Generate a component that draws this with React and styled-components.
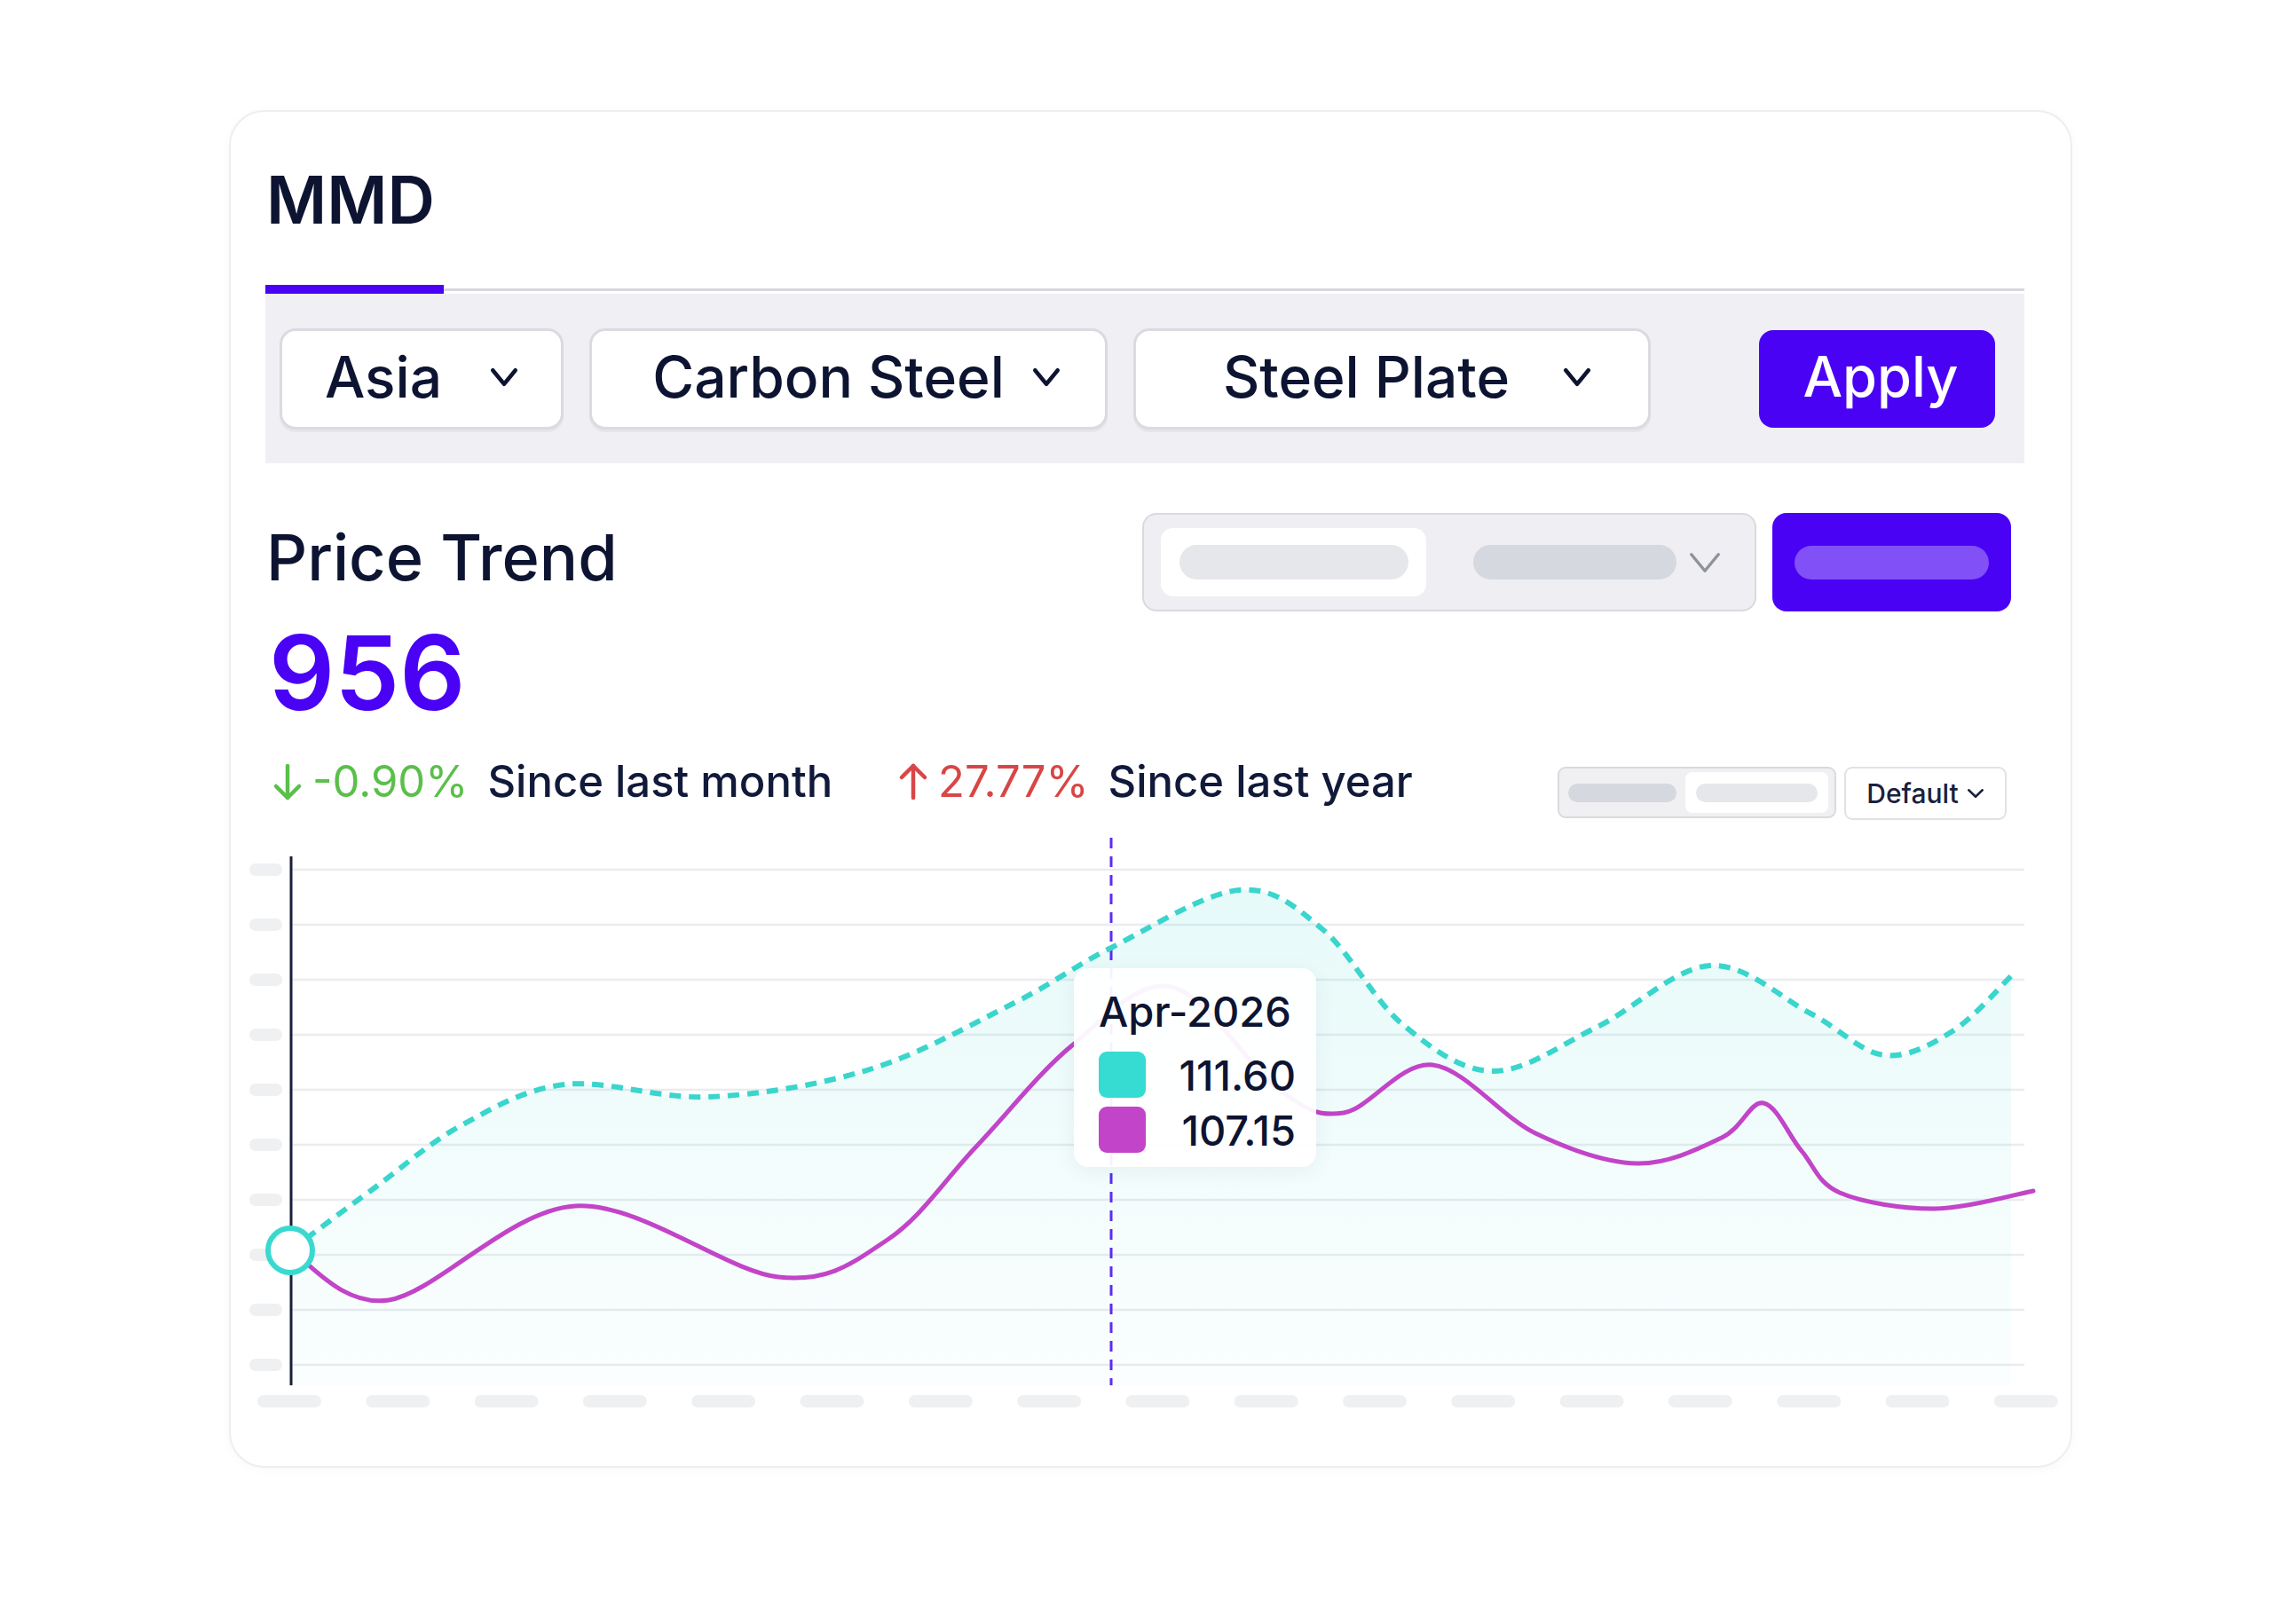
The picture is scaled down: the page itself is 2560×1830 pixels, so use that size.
import React from 'react';
import styled, { createGlobalStyle } from 'styled-components';

const GlobalStyle = createGlobalStyle`
  body {
    margin: 0;
    background: #fff;
    font-family: Inter, "Noto Sans", sans-serif;
  }
`;

const PURPLE = '#4a02f5';
const INK = '#0d1431';

const Page = styled.div`
  box-sizing: border-box;
  min-height: 1830px;
  padding: 124px 0 0 258px;
`;

const Card = styled.div`
  box-sizing: border-box;
  width: 2077px;
  height: 1530px;
  border: 2px solid #eceef1;
  border-radius: 40px;
  background: #fff;
  box-shadow: 0 2px 12px rgba(20, 30, 60, 0.03);
  overflow: hidden;
`;

const Inner = styled.div`
  padding: 0 52px 0 39px;
`;

const Title = styled.h1`
  margin: 62px 0 0 1px;
  font-size: 74px;
  line-height: 1;
  font-weight: 600;
  color: ${INK};
`;

const TabStrip = styled.div`
  margin-top: 59px;
  height: 10px;
  background: linear-gradient(#d6d8dd, #d6d8dd) 0 4px / 100% 3px no-repeat;
`;

const ActiveTab = styled.div`
  width: 201px;
  height: 10px;
  background: ${PURPLE};
`;

const FilterBar = styled.div`
  box-sizing: border-box;
  height: 191px;
  padding: 0 33px 0 16px;
  display: flex;
  align-items: center;
  gap: 29px;
  background: #efeff4;
`;

const Select = styled.div`
  box-sizing: border-box;
  width: ${p => p.$w}px;
  height: 114px;
  display: flex;
  align-items: center;
  justify-content: center;
  gap: ${p => p.$gap}px;
  padding: 0 0 4px ${p => p.$shift || 0}px;
  border: 3px solid #dadbe0;
  border-radius: 18px;
  background: #fff;
  box-shadow: 0 3px 0 rgba(0, 0, 0, 0.04);
  font-size: 64px;
  font-weight: 500;
  line-height: 1;
  color: ${INK};
`;

const ApplyButton = styled.button`
  margin-left: auto;
  width: 266px;
  height: 110px;
  padding: 0 0 4px 8px;
  border: none;
  border-radius: 16px;
  background: ${PURPLE};
  color: #fff;
  font-family: inherit;
  font-size: 63px;
  font-weight: 500;
  line-height: 1;
`;

const Header = styled.div`
  display: flex;
  justify-content: space-between;
  align-items: flex-start;
  padding-top: 56px;
`;

const Heading = styled.h2`
  margin: 14px 0 0 1px;
  font-size: 72px;
  line-height: 1;
  font-weight: 500;
  color: ${INK};
`;

const BigNumber = styled.div`
  margin: 36px 0 0 4px;
  font-size: 116px;
  line-height: 1;
  font-weight: 600;
  color: ${PURPLE};
`;

const Controls = styled.div`
  display: flex;
  gap: 18px;
  margin-right: 15px;
`;

const ControlGroup = styled.div`
  box-sizing: border-box;
  width: 692px;
  height: 111px;
  display: flex;
  align-items: center;
  padding-left: 19px;
  border: 2px solid #d9dadf;
  border-radius: 16px;
  background: #efeff3;
`;

const Segment = styled.div`
  box-sizing: border-box;
  width: ${p => p.$w}px;
  height: ${p => p.$h}px;
  display: flex;
  align-items: center;
  justify-content: center;
  border-radius: ${p => p.$r}px;
  background: #fff;
`;

const Pill = styled.div`
  flex: none;
  width: ${p => p.$w}px;
  height: ${p => p.$h}px;
  border-radius: 999px;
  background: ${p => p.$c};
  margin-left: ${p => p.$ml || 0}px;
`;

const ChevronSlot = styled.div`
  display: flex;
  margin-left: ${p => p.$ml}px;
`;

const PrimaryBlock = styled.div`
  width: 269px;
  height: 111px;
  display: flex;
  align-items: center;
  justify-content: center;
  border-radius: 16px;
  background: ${PURPLE};
`;

const StatsRow = styled.div`
  display: flex;
  align-items: flex-start;
  margin-top: 40px;
`;

const Stat = styled.div`
  display: flex;
  align-items: center;
  margin-left: ${p => p.$ml || 0}px;
  font-size: 49px;
  line-height: 1;
`;

const Delta = styled.span`
  margin-left: 11px;
  color: ${p => p.$c};
  font-weight: 400;
`;

const Since = styled.span`
  margin-left: 22px;
  color: #111a3a;
  font-weight: 500;
`;

const MiniControls = styled.div`
  display: flex;
  gap: 9px;
  margin: 8px 20px 0 auto;
`;

const MiniGroup = styled.div`
  box-sizing: border-box;
  width: 314px;
  height: 58px;
  display: flex;
  align-items: center;
  gap: 10px;
  padding-left: 10px;
  border: 2px solid #d9dade;
  border-radius: 9px;
  background: #f0f0f3;
`;

const DefaultSelect = styled.div`
  box-sizing: border-box;
  width: 183px;
  height: 60px;
  display: flex;
  align-items: center;
  justify-content: center;
  gap: 9px;
  border: 2px solid #e1e2e6;
  border-radius: 9px;
  background: #fff;
  font-size: 30px;
  font-weight: 500;
  color: #19203e;
`;

const ChartWrap = styled.div`
  position: relative;
  margin-top: 18px;
  width: 2073px;
  height: 680px;
`;

const Tooltip = styled.div`
  position: absolute;
  left: 950px;
  top: 149px;
  box-sizing: border-box;
  width: 273px;
  height: 224px;
  padding: 25px 23px 0 28px;
  border-radius: 16px;
  background: rgba(255, 255, 255, 0.94);
  box-shadow: 0 4px 24px rgba(30, 40, 80, 0.06);
  color: ${INK};
  font-weight: 500;
`;

const TipDate = styled.div`
  font-size: 47px;
  line-height: 1;
`;

const TipRows = styled.div`
  display: flex;
  flex-direction: column;
  gap: 10px;
  margin-top: 22px;
`;

const TipRow = styled.div`
  display: flex;
  align-items: center;
  justify-content: space-between;
  height: 52px;
  font-size: 47px;
  line-height: 1;
`;

const Swatch = styled.div`
  width: 53px;
  height: 52px;
  border-radius: 9px;
  background: ${p => p.$c};
`;

const Chevron = ({ w = 32, h = 22, color = INK, sw = 4.5 }) => (
  <svg width={w} height={h} viewBox={`0 0 ${w} ${h}`} fill="none">
    <polyline
      points={`${sw / 2 + 1},${sw / 2 + 1} ${w / 2},${h - sw / 2 - 1} ${w - sw / 2 - 1},${sw / 2 + 1}`}
      stroke={color}
      strokeWidth={sw}
      strokeLinecap="round"
      strokeLinejoin="round"
    />
  </svg>
);

const Arrow = ({ up, color }) => (
  <svg width="42" height="44" viewBox="0 0 42 44" fill="none">
    <g
      stroke={color}
      strokeWidth="4.5"
      strokeLinecap="round"
      strokeLinejoin="round"
      transform={up ? 'rotate(180 25 22)' : undefined}
    >
      <line x1="25" y1="4" x2="25" y2="40" />
      <polyline points="12,27 25,40 38,27" />
    </g>
  </svg>
);

/* smooth path through points (catmull-rom) */
const smooth = pts => {
  let d = `M${pts[0][0]},${pts[0][1]}`;
  for (let i = 0; i < pts.length - 1; i++) {
    const p0 = pts[i - 1] || pts[i];
    const p1 = pts[i];
    const p2 = pts[i + 1];
    const p3 = pts[i + 2] || p2;
    const c1x = p1[0] + (p2[0] - p0[0]) / 6;
    const c1y = p1[1] + (p2[1] - p0[1]) / 6;
    const c2x = p2[0] - (p3[0] - p1[0]) / 6;
    const c2y = p2[1] - (p3[1] - p1[1]) / 6;
    d += ` C${c1x.toFixed(1)},${c1y.toFixed(1)} ${c2x.toFixed(1)},${c2y.toFixed(1)} ${p2[0]},${p2[1]}`;
  }
  return d;
};

const teal = [
  [327, 1407], [420, 1338], [520, 1266], [637, 1220], [800, 1234],
  [980, 1203], [1143, 1128], [1252, 1066], [1396, 1001], [1490, 1045],
  [1580, 1152], [1682, 1205], [1800, 1155], [1927, 1086], [2040, 1140],
  [2123, 1187], [2200, 1160], [2266, 1098],
];

const magenta = [
  [327, 1407], [438, 1463], [648, 1357], [877, 1437], [1000, 1395],
  [1100, 1290], [1208, 1176], [1320, 1110], [1440, 1225], [1514, 1252],
  [1614, 1198], [1730, 1275], [1845, 1309], [1940, 1280], [1987, 1241],
  [2030, 1295], [2073, 1342], [2180, 1360], [2291, 1340],
];

const gridYs = Array.from({ length: 10 }, (_, i) => 978 + i * 62);
const xTicks = Array.from({ length: 17 }, (_, i) => 290 + i * 122.3);

const PriceChart = () => (
  <svg width="2073" height="680" viewBox="260 940 2073 680" style={{ display: 'block' }}>
    <defs>
      <linearGradient id="areaFill" x1="0" y1="1000" x2="0" y2="1560" gradientUnits="userSpaceOnUse">
        <stop offset="0" stopColor="#33d6cd" stopOpacity="0.12" />
        <stop offset="1" stopColor="#33d6cd" stopOpacity="0.02" />
      </linearGradient>
    </defs>
    {gridYs.map(y => (
      <g key={y}>
        <line x1="329" x2="2281" y1={y} y2={y} stroke="#eaecf0" strokeWidth="2.5" />
        <rect x="281" y={y - 7} width="37" height="14" rx="7" fill="#eff0f2" />
      </g>
    ))}
    {xTicks.map(x => (
      <rect key={x} x={x} y="1570" width="72" height="14" rx="7" fill="#eff0f2" />
    ))}
    <path d={`${smooth(teal)} L2266,1560 L327,1560 Z`} fill="url(#areaFill)" />
    <line x1="328" x2="328" y1="963" y2="1559" stroke="#1b1f3b" strokeWidth="3" />
    <line x1="1252" x2="1252" y1="942" y2="1559" stroke="#5a2df2" strokeWidth="3" strokeDasharray="12 9" />
    <path d={smooth(magenta)} fill="none" stroke="#c244c8" strokeWidth="5" strokeLinecap="round" />
    <path d={smooth(teal)} fill="none" stroke="#3ad5cc" strokeWidth="6" strokeDasharray="13 9" />
    <circle cx="327" cy="1407" r="25" fill="#fff" stroke="#3ad9cf" strokeWidth="6" />
  </svg>
);

export default function App() {
  return (
    <Page>
      <GlobalStyle />
      <Card>
        <Inner>
          <Title>MMD</Title>
          <TabStrip>
            <ActiveTab />
          </TabStrip>
          <FilterBar>
            <Select $w={320} $gap={54}>
              Asia <Chevron />
            </Select>
            <Select $w={584} $gap={31} $shift={18}>
              Carbon Steel <Chevron />
            </Select>
            <Select $w={583} $gap={60} $shift={34}>
              Steel Plate <Chevron />
            </Select>
            <ApplyButton>Apply</ApplyButton>
          </FilterBar>

          <Header>
            <div>
              <Heading>Price Trend</Heading>
              <BigNumber>956</BigNumber>
            </div>
            <Controls>
              <ControlGroup>
                <Segment $w={299} $h={77} $r={14}>
                  <Pill $w={258} $h={39} $c="#e6e7ea" />
                </Segment>
                <Pill $w={229} $h={39} $c="#d5d8df" $ml={53} />
                <ChevronSlot $ml={14}>
                  <Chevron w={36} h={24} sw={3.5} color="#8e939b" />
                </ChevronSlot>
              </ControlGroup>
              <PrimaryBlock>
                <Pill $w={219} $h={38} $c="#8250f7" />
              </PrimaryBlock>
            </Controls>
          </Header>

          <StatsRow>
            <Stat>
              <Arrow color="#5bbf4b" />
              <Delta $c="#5bbf4b">-0.90%</Delta>
              <Since>Since last month</Since>
            </Stat>
            <Stat $ml={66}>
              <Arrow up color="#d84646" />
              <Delta $c="#d84646">27.77%</Delta>
              <Since>Since last year</Since>
            </Stat>
            <MiniControls>
              <MiniGroup>
                <Pill $w={122} $h={21} $c="#d5d8df" />
                <Segment $w={161} $h={46} $r={8}>
                  <Pill $w={137} $h={21} $c="#e6e7ea" />
                </Segment>
              </MiniGroup>
              <DefaultSelect>
                Default <Chevron w={20} h={12} sw={2.5} color="#19203e" />
              </DefaultSelect>
            </MiniControls>
          </StatsRow>
        </Inner>

        <ChartWrap>
          <PriceChart />
          <Tooltip>
            <TipDate>Apr-2026</TipDate>
            <TipRows>
              <TipRow>
                <Swatch $c="#36dbd2" />
                111.60
              </TipRow>
              <TipRow>
                <Swatch $c="#c244c8" />
                107.15
              </TipRow>
            </TipRows>
          </Tooltip>
        </ChartWrap>
      </Card>
    </Page>
  );
}
